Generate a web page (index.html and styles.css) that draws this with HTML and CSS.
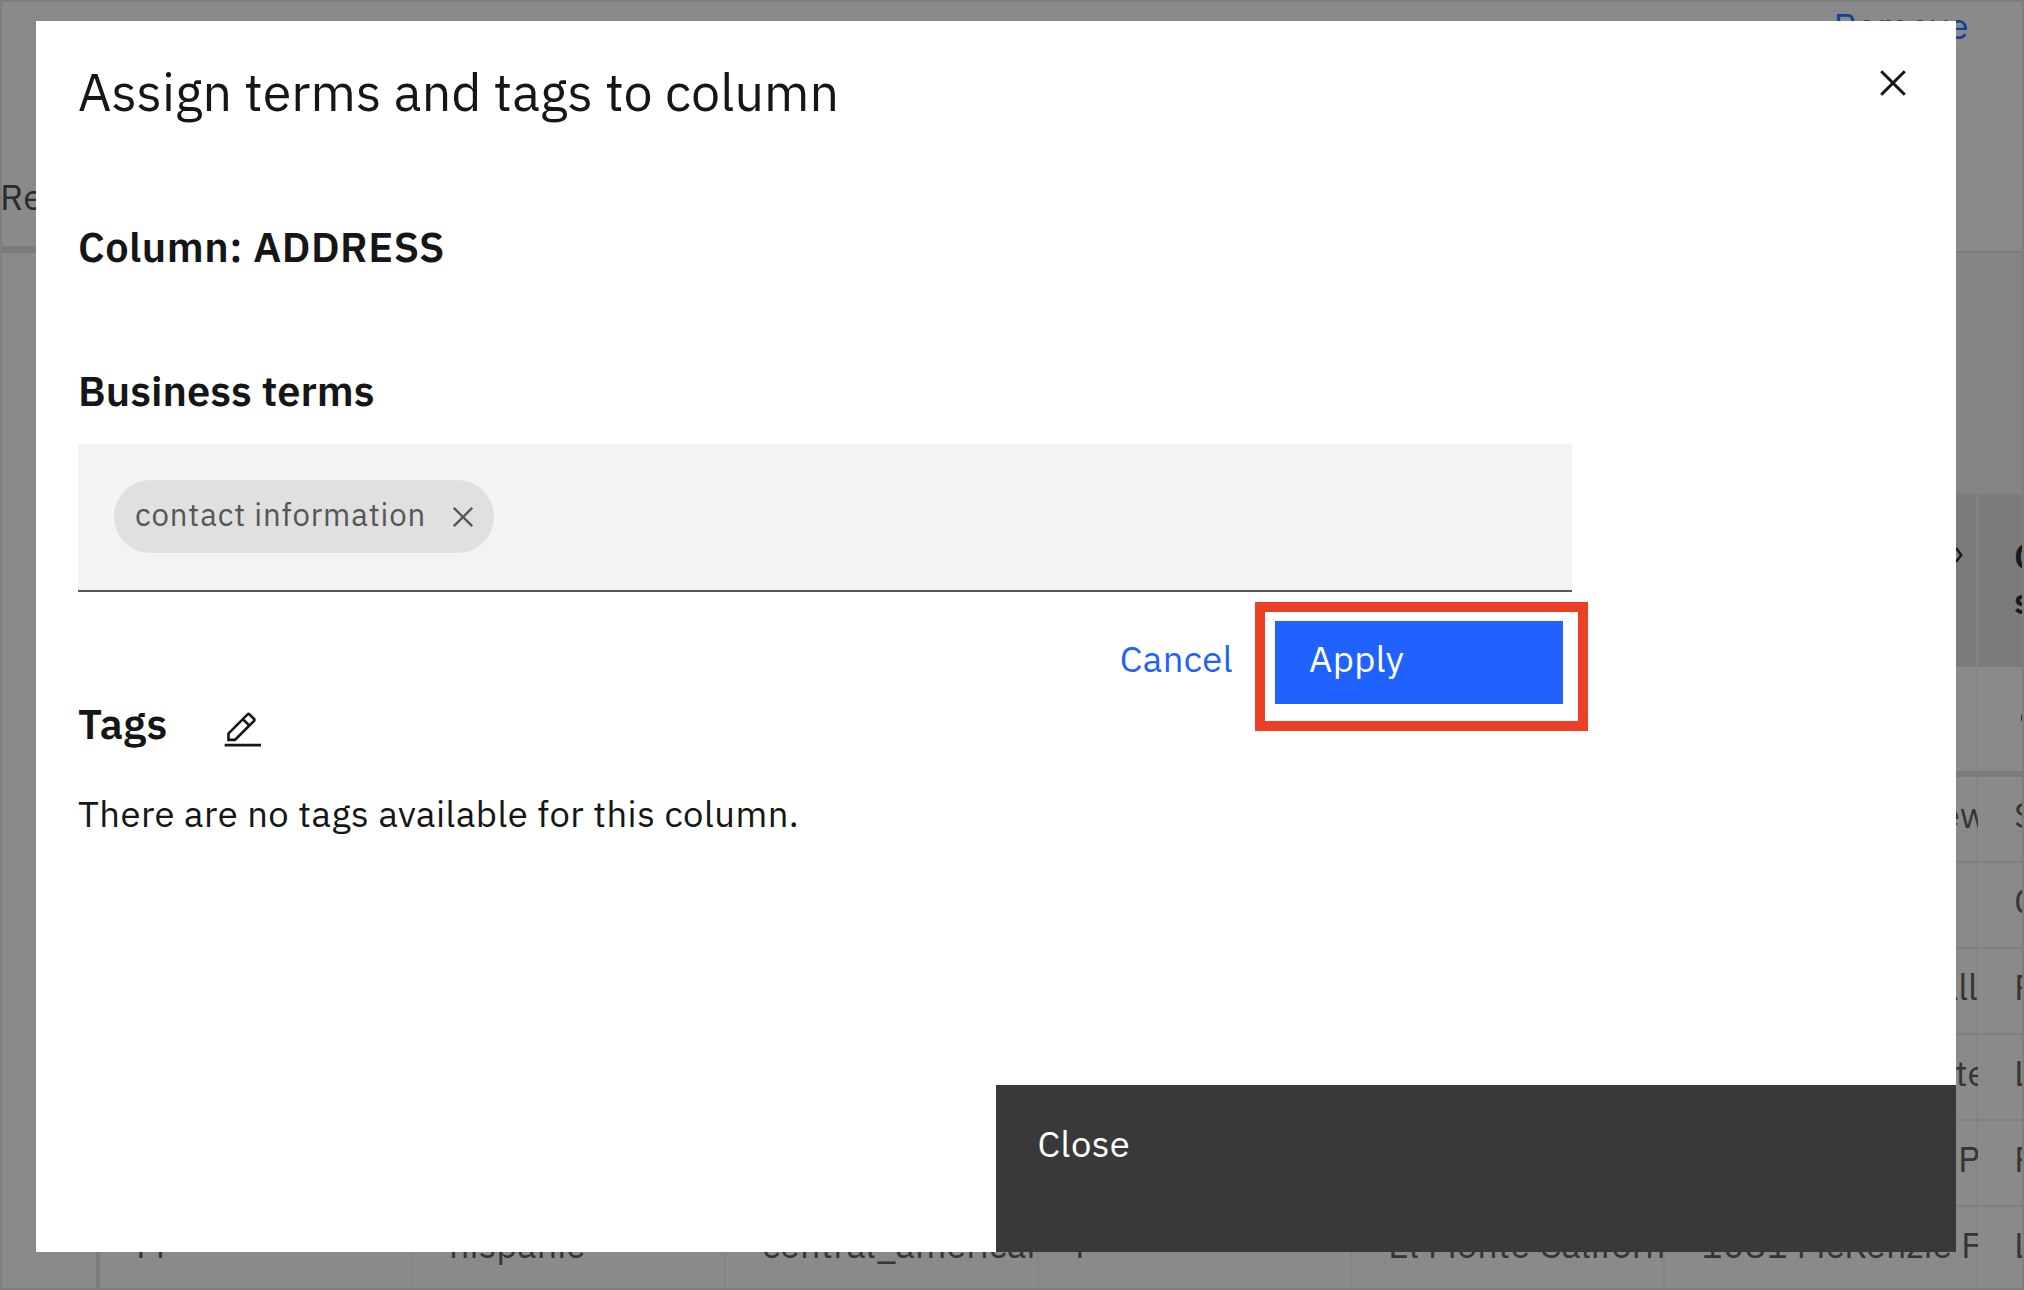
FILE: index.html
```html
<!DOCTYPE html>
<html lang="en">
<head>
<meta charset="utf-8">
<title>Assign terms and tags to column</title>
<link rel="stylesheet" href="styles.css">
</head>
<body>
<div class="page">
  <header class="page-top">
    <a class="remove">Remove</a>
    <span class="tab">Re</span>
  </header>
  <main class="workspace">
    <aside class="gutter"></aside>
    <section class="results">
      <div class="toolbar"></div>
      <div class="row row-head">
        <div class="cell"></div><div class="cell"></div><div class="cell"></div><div class="cell"></div><div class="cell"></div>
        <div class="cell cell-next"><svg width="14" height="18" viewBox="0 0 14 18"><path d="M7 2L12.3 9L7 16" fill="none" stroke="#191919" stroke-width="2.4"/></svg></div>
        <div class="cell">C<br>s</div>
      </div>
      <div class="row row-sub">
        <div class="cell"></div><div class="cell"></div><div class="cell"></div><div class="cell"></div><div class="cell"></div><div class="cell"></div>
        <div class="cell"><i class="dot"></i></div>
      </div>
      <div class="row">
        <div class="cell"></div><div class="cell"></div><div class="cell"></div><div class="cell"></div><div class="cell"></div>
        <div class="cell tail-ew">ew</div><div class="cell">S</div>
      </div>
      <div class="row">
        <div class="cell"></div><div class="cell"></div><div class="cell"></div><div class="cell"></div><div class="cell"></div>
        <div class="cell"></div><div class="cell">C</div>
      </div>
      <div class="row">
        <div class="cell"></div><div class="cell"></div><div class="cell"></div><div class="cell"></div><div class="cell"></div>
        <div class="cell tail-all">all</div><div class="cell">R</div>
      </div>
      <div class="row">
        <div class="cell"></div><div class="cell"></div><div class="cell"></div><div class="cell"></div><div class="cell"></div>
        <div class="cell tail-te">te</div><div class="cell">L</div>
      </div>
      <div class="row">
        <div class="cell"></div><div class="cell"></div><div class="cell"></div><div class="cell"></div><div class="cell"></div>
        <div class="cell tail-p">P</div><div class="cell">R</div>
      </div>
      <div class="row row-last">
        <div class="cell">M</div><div class="cell">hispanic</div><div class="cell">central_american</div><div class="cell">F</div><div class="cell">El Monte California</div>
        <div class="cell">1081 McKenzie F</div><div class="cell">L</div>
      </div>
    </section>
  </main>
</div>

<div class="modal" role="dialog">
  <svg class="modal-x" width="26" height="26" viewBox="0 0 26 26"><path d="M1.2 1.2L24.8 24.8M24.8 1.2L1.2 24.8" stroke="#161616" stroke-width="3"/></svg>
  <div class="modal-body">
    <h1 class="title">Assign terms and tags to column</h1>
    <h2 class="heading column-name">Column: ADDRESS</h2>
    <h2 class="heading terms-heading">Business terms</h2>
    <div class="terms">
      <div class="field">
        <div class="tag">
          <span class="tag-label">contact information</span>
          <svg width="20" height="20" viewBox="0 0 20 20"><path d="M.8 .8L19.2 19.2M19.2 .8L.8 19.2" stroke="#565656" stroke-width="2.3"/></svg>
        </div>
      </div>
      <div class="actions">
        <a class="cancel">Cancel</a>
        <div class="apply">Apply</div>
      </div>
    </div>
    <div class="tags-row">
      <h2 class="heading tags-heading">Tags</h2>
      <svg class="edit" viewBox="0 0 32 32"><path fill="#161616" fill-rule="evenodd" d="M2 26H30V28H2zM25.4 9c.8-.8.8-2 0-2.8l-3.6-3.6c-.8-.8-2-.8-2.8 0l-15 15V24h6.4L25.4 9zM20.4 4L24 7.6l-3 3L17.4 7 20.4 4zM6 22v-3.6l10-10 3.6 3.6-10 10H6z"/></svg>
    </div>
    <p class="empty">There are no tags available for this column.</p>
  </div>
  <footer class="modal-footer"><div class="close">Close</div></footer>
</div>
</body>
</html>
```
FILE: styles.css
```css
* { box-sizing: border-box; margin: 0; }
body {
  height: 1290px;
  overflow: hidden;
  font: 400 36.4px/48px "IBM Plex Sans", "Open Sans", "Noto Sans", sans-serif;
  letter-spacing: .42px;
  color: #161616;
}

/* Dimmed page behind the dialog */
.page {
  display: flex;
  flex-direction: column;
  height: 1290px;
  border: 2px solid #7e7e7e;
  background: #8a8a8a;
  color: #353535;
  overflow: hidden;
}
.page-top {
  display: flex;
  flex-direction: column;
  justify-content: space-between;
  height: 251px;
  border-bottom: 2px solid #7b7b7b;
}
.remove { align-self: flex-end; margin-right: 53px; color: #12419b; letter-spacing: .55px; }
.tab {
  width: 98px;
  height: 80px;
  margin-left: -2px;
  margin-bottom: -2px;
  border-bottom: 7px solid #7b7b7b;
  color: #2b2b2b;
}
.workspace { display: flex; flex: 1; }
.gutter { width: 94px; background: #898989; }
.results { flex: 1; min-width: 0; border-left: 4px solid #7d7d7d; font-size: 36px; letter-spacing: .12px; }
.toolbar { height: 242px; background: #858585; border-bottom: 2px solid #808080; }
.row {
  display: grid;
  grid-template-columns: 313px repeat(5, 313px) 44px;
  height: 86px;
  border-bottom: 2px solid #808080;
}
.cell {
  padding: 14px 0 0 36px;
  overflow: hidden;
  white-space: nowrap;
  box-shadow: inset -2px 0 #848484;
}
.cell:last-child { box-shadow: none; }
.row-head { height: 172px; border: 0; background: #7b7b7b; font-weight: 600; line-height: 45px; color: #191919; }
.row-head .cell { padding-top: 38px; }
.row-head .cell-next { display: flex; justify-content: flex-end; padding: 51px 15px 0 0; }
.row-sub { height: 110px; border-bottom: 6px solid #7c7c7c; }
.row-last { border: 0; height: 81px; }
.dot { display: block; width: 20px; height: 20px; margin: 27px 0 0 7px; border: 2px solid #222; border-radius: 50%; }
.row .tail-ew { padding-left: 275px; }
.row .tail-all { padding-left: 274px; }
.row .tail-te { padding-left: 290px; }
.row .tail-p { padding-left: 293px; }

/* Dialog */
.modal {
  position: absolute;
  left: 36px;
  top: 21px;
  display: flex;
  flex-direction: column;
  width: 1920px;
  height: 1231px;
  background: #fff;
}
.modal-x { position: absolute; right: 50px; top: 49px; }
.modal-body { flex: 1; padding: 41px 42px 0; }
.title { font-size: 52px; font-weight: 400; line-height: 60px; letter-spacing: .09px; }
.heading { font-size: 41.6px; font-weight: 600; line-height: 50px; letter-spacing: .42px; }
.column-name { margin-top: 99px; letter-spacing: .5px; }
.terms-heading { margin-top: 94px; letter-spacing: .08px; }
.terms { width: 1494px; margin-top: 29px; }
.field { height: 148px; padding: 36px; background: #f3f3f3; border-bottom: 2px solid #565656; }
.tag {
  display: flex;
  align-items: center;
  justify-content: space-between;
  width: 380px;
  height: 73px;
  padding: 0 21px;
  border-radius: 37px;
  background: #e0e0e0;
  color: #565656;
}
.tag-label { margin-top: -4px; font-size: 31.2px; line-height: 40px; letter-spacing: .88px; }
.actions { display: flex; justify-content: flex-end; gap: 42px; padding: 29px 9px 0 0; }
.cancel { padding-top: 14px; color: #1f62fe; }
.apply {
  position: relative;
  width: 288px;
  height: 83px;
  padding: 14px 34px;
  background: #1f62fe;
  color: #fff;
}
.apply::after {
  content: "";
  position: absolute;
  inset: -19px -25px -27px -20px;
  border: 10px solid #eb3f26;
}
.tags-row { display: flex; margin-top: -6px; }
.tags-heading { width: 144px; }
.edit { width: 41.6px; height: 41.6px; margin: 12px 0 -4px; }
.empty { margin-top: 42px; letter-spacing: .48px; }
.modal-footer { display: flex; justify-content: flex-end; }
.close { width: 960px; height: 167px; padding: 35px 41.6px; background: #393939; color: #fff; }
```
